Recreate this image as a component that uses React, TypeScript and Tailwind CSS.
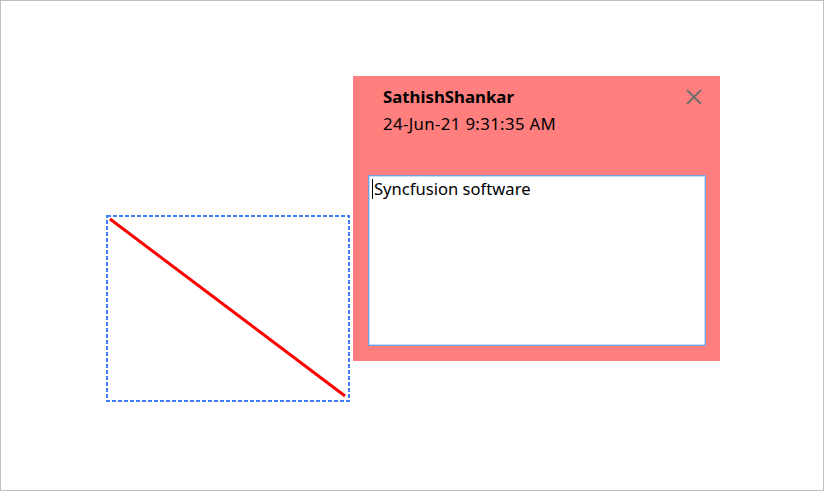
import React from "react";

export default function App() {
  return (
    <div className="relative w-[824px] h-[491px] bg-white border border-[#bfbfbf] overflow-hidden" style={{ fontFamily: '"Noto Sans", sans-serif' }}>
      <svg className="absolute left-[104px] top-[213px]" width="246" height="188" viewBox="0 0 246 188">
        <rect x="2" y="2" width="242" height="185" fill="none" stroke="#3d7eff" strokeWidth="2" strokeDasharray="4 2" />
        <line x1="5" y1="5" x2="240" y2="182" stroke="#ff0000" strokeWidth="3" />
      </svg>
      <div className="absolute left-[352px] top-[75px] w-[367px] h-[285px] bg-[#ff7f7f] flex flex-col">
        <div className="flex justify-between pl-[30px] pr-[18px] pt-[9px]">
          <div className="flex flex-col text-black">
            <div className="text-[16.8px] font-bold leading-[23px]">SathishShankar</div>
            <div className="text-[16.8px] tracking-[0.35px] leading-[23px] mt-[4px]">24-Jun-21 9:31:35 AM</div>
          </div>
          <svg width="16" height="16" viewBox="0 0 16 16" className="mt-[4px]">
            <path d="M1 1 L15 15 M15 1 L1 15" stroke="#6e6e6e" strokeWidth="2" />
          </svg>
        </div>
        <div className="ml-[15px] mt-[40px] w-[338px] h-[171px] border border-[#6f9fe0] bg-white">
          <div className="w-full h-full border border-[#c8dbf5] flex items-start">
            <div className="text-[16.6px] leading-[22px] text-black pl-[2px] pt-[1px] flex items-center">
              <span className="inline-block w-[1px] h-[20px] bg-black mr-[1px]"></span>
              Syncfusion software
            </div>
          </div>
        </div>
      </div>
    </div>
  );
}
